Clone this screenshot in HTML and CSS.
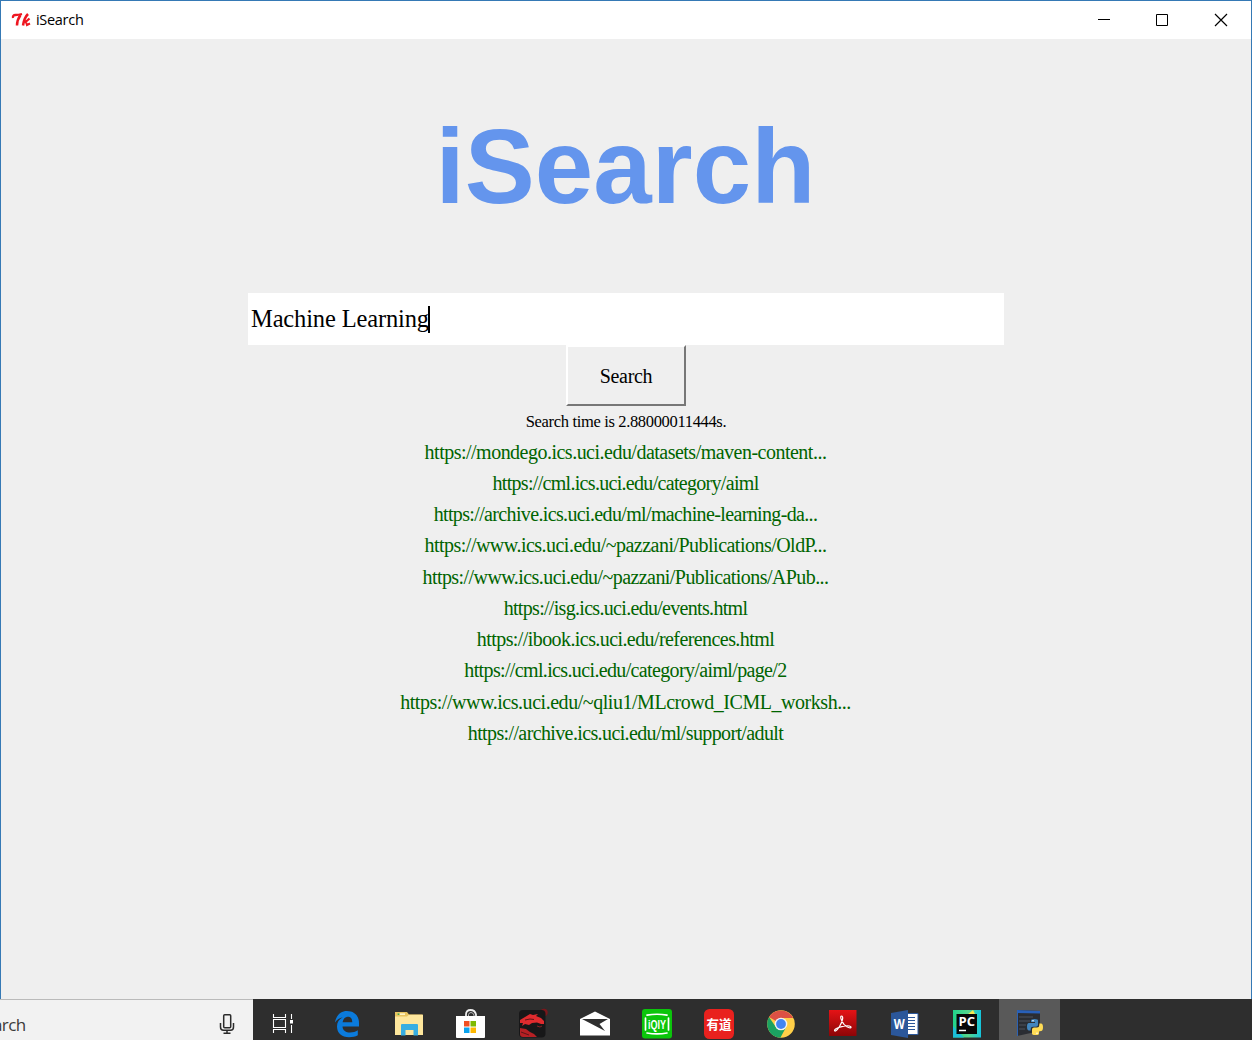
FILE: index.html
```html
<!DOCTYPE html>
<html lang="en">
<head>
<meta charset="utf-8">
<title>iSearch</title>
<link rel="stylesheet" href="styles.css">
</head>
<body>
<main class="window">
  <header class="titlebar">
    <svg class="tk-icon" width="20" height="16" viewBox="0 0 20 16" fill="none" stroke="#ee1620">
      <path d="M2 6Q1.500 3 4.500 3T11 2" stroke-width="2.300"/>
      <path d="M9.500 3Q6 8 6 13.500" stroke-width="2.500"/>
      <path d="M17 2Q13 6 12 13.500" stroke-width="2.500"/>
      <path d="M18.500 6.500Q16 9.500 13.500 9.500Q15.500 10 16 13L19 11.500" stroke-width="2"/>
    </svg>
    <span class="caption">iSearch</span>
    <div class="controls">
      <svg width="58" height="38" viewBox="0 0 58 38"><path d="M22 18.500H34" stroke="#000" fill="none"/></svg>
      <svg width="58" height="38" viewBox="0 0 58 38"><path d="M22.500 13.500H33.500V24.500H22.500Z" stroke="#000" fill="none"/></svg>
      <svg width="58" height="38" viewBox="0 0 58 38"><path d="M23 13L35 25M35 13L23 25" stroke="#000" stroke-width="1.200" fill="none"/></svg>
    </div>
  </header>
  <section class="content">
    <h1 class="logo">iSearch</h1>
    <div class="query"><span class="query-text">Machine Learning</span><span class="caret"></span></div>
    <button class="search">Search</button>
    <p class="timing">Search time is 2.88000011444s.</p>
    <ul class="results">
      <li class="r1"><span>https://mondego.ics.uci.edu/datasets/maven-content...</span></li>
      <li class="r2"><span>https://cml.ics.uci.edu/category/aiml</span></li>
      <li class="r3"><span>https://archive.ics.uci.edu/ml/machine-learning-da...</span></li>
      <li class="r4"><span>https://www.ics.uci.edu/~pazzani/Publications/OldP...</span></li>
      <li class="r5"><span>https://www.ics.uci.edu/~pazzani/Publications/APub...</span></li>
      <li class="r6"><span>https://isg.ics.uci.edu/events.html</span></li>
      <li class="r7"><span>https://ibook.ics.uci.edu/references.html</span></li>
      <li class="r8"><span>https://cml.ics.uci.edu/category/aiml/page/2</span></li>
      <li class="r9"><span>https://www.ics.uci.edu/~qliu1/MLcrowd_ICML_worksh...</span></li>
      <li class="r10"><span>https://archive.ics.uci.edu/ml/support/adult</span></li>
    </ul>
  </section>
</main>
<footer class="taskbar">
  <div class="cortana">
    <span class="cortana-text">arch</span>
    <svg class="mic" width="16" height="22" viewBox="0 0 16 22" fill="none" stroke="#2b2b2b" stroke-width="1.500">
      <rect x="4.700" y="1.700" width="7" height="13" rx="1"/>
      <path d="M1.500 10V14Q1.500 17.300 4.500 17.300H11.500Q14.500 17.300 14.500 14V10M8 17.300V20.200M4.500 20.200H11.500"/>
    </svg>
  </div>
  <nav class="apps">
    <div class="app"><svg width="32" height="32" viewBox="0 0 32 32" fill="none" stroke="#fff" stroke-width="1.100">
      <path d="M4.500 6V9.500H16.500V6M4.500 25V21.500H16.500V25M4.500 11.500H16.500V19.500H4.500ZM22.500 6V11M22.500 17V25"/><path d="M21 12H24V15.500H21Z" fill="#fff" stroke="none"/>
    </svg></div>
    <div class="app"><svg width="32" height="32" viewBox="0 0 32 32">
      <path fill="#0b7bdc" d="M4 14.500C5 7.500 9.800 3 16 3C23.500 3 28 8 28 15V18.500H11.500C11.800 22.500 15 24.500 19 24.500C22 24.500 24.500 23.700 26.800 22.300V27.300C24.300 28.700 21.500 29.200 18.200 29.200C10.500 29.200 6 25 6 18.500C6 14.500 8 11.200 11.800 9.300C8.500 9.800 6 11.700 4 14.500ZM11.600 14.200H21.300C21.300 10.500 19.600 8.800 16.800 8.800C14 8.800 12.200 11 11.600 14.200Z"/>
    </svg></div>
    <div class="app"><svg width="32" height="32" viewBox="0 0 32 32">
      <path fill="#e9c45f" d="M2 4H14L16 6.500H29.500V26H2Z"/><path fill="#fff3c4" d="M4.500 5.300H12V7H4.500Z"/><path fill="#50a23b" d="M4.500 5.300H6.500V7H4.500Z"/>
      <path fill="#fee79d" d="M2 8.500H14L16 6.800H30V27H2Z"/><path fill="#37aee2" d="M8 17Q8 16 9 16H24Q25 16 25 17V27.500H20.500V22H12.500V27.500H8Z"/>
    </svg></div>
    <div class="app"><svg width="32" height="32" viewBox="0 0 32 32">
      <path d="M11 8V6.500Q11 2 15.500 2T21 6.500V8" fill="none" stroke="#eee" stroke-width="1.800"/><path d="M13.500 8V6.700Q14 4.500 16 4.500T19 7V8" fill="none" stroke="#bbb" stroke-width="1"/>
      <path d="M1 8H30V29Q30 30 29 30H2Q1 30 1 29Z" fill="#fff"/>
      <path d="M9 13H14.500V18.500H9Z" fill="#f04f23"/><path d="M15.500 13H21V18.500H15.500Z" fill="#7db900"/><path d="M9 19.500H14.500V25H9Z" fill="#0aa3ee"/><path d="M15.500 19.500H21V25H15.500Z" fill="#feb801"/>
    </svg></div>
    <div class="app"><svg width="32" height="32" viewBox="0 0 32 32">
      <circle cx="27" cy="4.500" r="3.700" fill="#7a171b"/><rect x="2" y="2" width="26.500" height="27.500" rx="4" fill="#171718"/>
      <path fill="#df2b2e" d="M3 12L8 9L13 6L16 7L21 6L19 8L24 10L27 13L27 16L24 16L20 14.500L15 15L12 17L8 16L5 18L6 15L3 15Z"/>
      <path fill="#b62024" d="M3 20L9 21L13 24L17 26L20 29H6Q3 29 3 26Z"/><path d="M8 12L13 11L17 11.500M4 24L12 27" fill="none" stroke="#5c1517" stroke-width="1"/><path d="M20 18L23 19L25 18" fill="none" stroke="#8a2023"/>
    </svg></div>
    <div class="app"><svg width="32" height="32" viewBox="0 0 32 32">
      <path fill="#fff" d="M1 11L16 3.500L31 11V27.500H1Z"/><path fill="#2e2e2e" d="M3 11H29L20.500 16L26 23L15.500 17.500Z"/>
    </svg></div>
    <div class="app"><svg width="32" height="32" viewBox="0 0 32 32">
      <rect x="1" y="1" width="30" height="29.500" rx="3" fill="#0bc50b"/><path d="M6 7.200Q16 5.300 26 7.200M6 25Q16 26.900 26 25M4.500 10V22M27.500 10V22" fill="none" stroke="#fff" stroke-width="1.700" stroke-linecap="round"/>
      <text x="7" y="21" textLength="18" lengthAdjust="spacingAndGlyphs" class="iqiyi">iQIY</text>
    </svg></div>
    <div class="app"><svg width="32" height="32" viewBox="0 0 32 32">
      <rect x="1" y="1" width="30" height="30" rx="5.500" fill="#e9211e"/><text x="16" y="21" text-anchor="middle" textLength="25" lengthAdjust="spacingAndGlyphs" class="youdao">有道</text>
    </svg></div>
    <div class="app"><svg width="32" height="32" viewBox="0 0 32 32">
      <circle cx="16" cy="16" r="13.800" fill="#ffcf48"/>
      <path fill="#dd5144" d="M16 16L4 9.100A13.800 13.800 0 0 1 28 9.700L27.700 10H16Z"/><path fill="#1ba261" d="M4 9.100A13.800 13.800 0 0 0 15.400 29.800L21.200 19L10.800 19Z"/>
      <circle cx="16" cy="16" r="6.300" fill="#f4f4f4"/><circle cx="16" cy="16" r="4.900" fill="#4285f4"/>
    </svg></div>
    <div class="app"><svg width="32" height="32" viewBox="0 0 32 32">
      <defs><linearGradient id="pdf" x2="0" y2="1"><stop stop-color="#e51316"/><stop offset="1" stop-color="#8c0507"/></linearGradient></defs>
      <rect x="2" y="2" width="27.500" height="26" fill="url(#pdf)"/><path d="M14.500 8C16.500 8 16 13 12.500 18.500C9.500 23.500 7.500 23.700 7.500 22.300C8 19.700 21 16.200 23.800 18.700C25 20.700 20.500 20.300 17 16.300C13.700 12.200 13 8 14.500 8Z" fill="none" stroke="#fff" stroke-width="1.200"/>
    </svg></div>
    <div class="app"><svg width="32" height="32" viewBox="0 0 32 32">
      <path fill="#fff" stroke="#2b579a" d="M17 5.500H29V26.500H17Z"/><path d="M18 9.500H26M18 12.500H26M18 15.500H26M18 18.500H26M18 21.500H26" stroke="#2b579a" stroke-width="1.200"/>
      <path fill="#2b579a" d="M2 5L19 2V30L2 27Z"/><text x="10.300" y="20.700" text-anchor="middle" textLength="11" lengthAdjust="spacingAndGlyphs" class="word">W</text>
    </svg></div>
    <div class="app"><svg width="32" height="32" viewBox="0 0 32 32">
      <defs><linearGradient id="pc"><stop stop-color="#20d58b"/><stop offset=".55" stop-color="#57d58d"/><stop offset="1" stop-color="#14c4dd"/></linearGradient></defs>
      <path fill="url(#pc)" d="M2 2H30V29.500H2Z"/><path fill="#f4e950" d="M16 7L22 2L25 8V14H16Z"/><path fill="#1cbfd8" d="M2 18L13 29.500H2Z"/>
      <rect x="5.500" y="6" width="20.500" height="20" fill="#080808"/><text x="7.500" y="17.500" textLength="16.500" lengthAdjust="spacingAndGlyphs" class="pycharm">PC</text><path d="M8 22.500H15" stroke="#fff" stroke-width="1.500"/>
    </svg></div>
    <div class="app active"><svg width="32" height="32" viewBox="0 0 32 32">
      <path fill="#2a2d33" d="M4 2L27 3V23L4 28Z"/><path fill="#2860b9" d="M4 2L27 3V5.500L4 5Z"/><path d="M6 9H20M6 13H17M6 17H13M6 21H12" stroke="#4c525c"/><path d="M4.500 2V28" stroke="#2c62b4"/>
      <path fill="#4285bd" d="M18 14V12.500Q18 11 21.500 11T25 12.500V17Q25 18.700 23 18.700H20Q17.700 18.700 17.700 21V22.500H16Q14 22.500 14 18.700T16 15H22V14Z"/><path fill="#ffdc55" d="M26 23.500V25.500Q26 27 22.500 27T19 25.500V21.500Q19 19.500 21 19.500H24Q26.300 19.500 26.300 17V15.500H28Q30 15.500 30 19.300T28 23Z"/><circle cx="20" cy="12.800" r=".8" fill="#fff"/><circle cx="24" cy="25.200" r=".8" fill="#fff"/>
    </svg></div>
  </nav>
</footer>
</body>
</html>
```
FILE: styles.css
```css
* { box-sizing: border-box; }

body {
  margin: 0;
  width: 1252px;
  height: 1040px;
  overflow: hidden;
  display: flex;
  flex-direction: column;
  background: #efefef;
  color: #000;
}

svg { display: block; flex: none; }

.window {
  height: 999px;
  flex: none;
  border: 1px solid #3579b5;
  border-bottom: 0;
  background: #efefef;
}

.titlebar {
  height: 38px;
  display: flex;
  align-items: center;
  padding-left: 10px;
  background: #fff;
}

.caption {
  margin-left: 5px;
  font: 14.5px/20px "Open Sans", sans-serif;
  letter-spacing: -0.3px;
}

.controls { display: flex; margin-left: auto; padding-right: 1px; }

.content {
  display: flex;
  flex-direction: column;
  align-items: center;
  font-family: "Liberation Serif", serif;
}

.logo {
  margin: 67px 0 0;
  font: bold 105px/122px "Liberation Sans", sans-serif;
  letter-spacing: 0.1px;
  padding-right: 1px;
  color: #6495ed;
}

.query {
  width: 756px;
  height: 52px;
  margin-top: 65px;
  padding-left: 3px;
  display: flex;
  align-items: center;
  background: #fff;
  font-size: 24.5px;
}

.query-text { letter-spacing: -0.15px; }

.caret { width: 2px; height: 27px; background: #000; margin-left: -1px; }

.search {
  width: 120px;
  height: 61px;
  padding: 0;
  border: 2px solid;
  border-color: #fff #777 #777 #fff;
  border-radius: 0;
  background: #efefef;
  color: #000;
  font: 20px/24px "Liberation Serif", serif;
  letter-spacing: -0.3px;
}

.timing {
  margin: 5px 0 0;
  font-size: 16.5px;
  line-height: 22px;
  letter-spacing: -0.34px;
}

.results {
  list-style: none;
  margin: 3.5px 1px 0 0;
  padding: 0;
  text-align: center;
  color: #006400;
  font-size: 20px;
}

.results li { height: 31.25px; line-height: 31px; white-space: nowrap; }

.r1 { letter-spacing: -0.51px; }
.r2 { letter-spacing: -0.69px; }
.r3 { letter-spacing: -0.64px; }
.r4 { letter-spacing: -0.52px; }
.r5 { letter-spacing: -0.57px; }
.r6 { letter-spacing: -0.69px; }
.r7 { letter-spacing: -0.58px; }
.r8 { letter-spacing: -0.64px; }
.r9 { letter-spacing: -0.46px; }
.r10 { letter-spacing: -0.62px; }

.taskbar { height: 41px; display: flex; flex: none; background: #2e2e2e; }

.cortana {
  width: 253px;
  display: flex;
  align-items: center;
  flex: none;
  padding: 9px 18px 0 0;
  border-top: 1px solid #bababa;
  background: #f2f2f2;
}

.cortana-text {
  margin-left: -7px;
  font: 17px/24px "Open Sans", sans-serif;
  letter-spacing: -0.6px;
  color: #3b3b3b;
}

.mic { margin: -2px 0 0 auto; }

.apps { display: flex; flex: 1; padding-left: 1px; }

.app { width: 62px; display: flex; justify-content: center; padding-top: 9px; }

.active { width: 61px; margin-left: 1px; padding-right: 1px; background: #595959; }

.iqiyi { font: bold 13px "Liberation Sans", sans-serif; fill: #fff; }
.youdao { font: bold 13px "Noto Sans CJK SC", sans-serif; fill: #fff; }
.word { font: bold 14px "Open Sans", sans-serif; fill: #fff; }
.pycharm { font: bold 12.5px "Open Sans", sans-serif; fill: #fff; }
```
